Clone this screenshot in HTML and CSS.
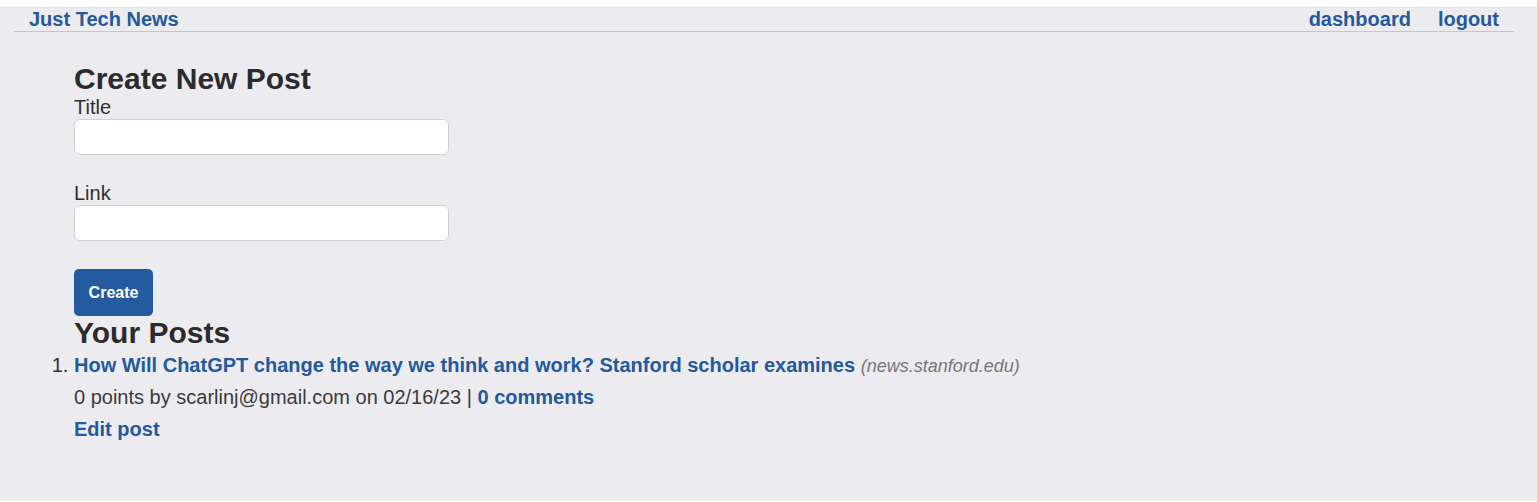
FILE: index.html
```html
<!DOCTYPE html>
<html>
<head>
<meta charset="utf-8">
<title>Just Tech News</title>
<link rel="stylesheet" href="styles.css">
</head>
<body>
<div class="page">
  <header class="topbar">
    <a class="brand" href="#">Just Tech News</a>
    <nav class="nav">
      <a href="#">dashboard</a>
      <a href="#">logout</a>
    </nav>
  </header>
  <main class="content">
    <h2 class="heading">Create New Post</h2>
    <form class="post-form">
      <label class="label" for="title">Title</label>
      <input class="field" id="title" type="text">
      <label class="label" for="link">Link</label>
      <input class="field" id="link" type="text">
      <button class="btn" type="button">Create</button>
    </form>
    <h2 class="heading">Your Posts</h2>
    <ol class="posts">
      <li class="post">
        <div class="post-title"><a href="#">How Will ChatGPT change the way we think and work? Stanford scholar examines</a> <span class="domain">(news.stanford.edu)</span></div>
        <div class="meta">0 points by scarlinj@gmail.com on 02/16/23 | <a href="#">0 comments</a></div>
        <div class="edit"><a href="#">Edit post</a></div>
      </li>
    </ol>
  </main>
</div>
</body>
</html>
```

FILE: styles.css
```css
html, body {
  margin: 0;
  padding: 0;
  background: #ffffff;
}
body {
  font-family: "Liberation Sans", Arial, sans-serif;
  color: #2e2e30;
}
a {
  color: #24599b;
  text-decoration: none;
  font-weight: bold;
}
.page {
  margin-top: 7px;
  border-top: 1px solid #e0e0e4;
  background: #ececf0;
  min-height: 494px;
  box-sizing: border-box;
}
.topbar {
  margin-left: 14px;
  width: 1500px;
  display: flex;
  justify-content: space-between;
  align-items: center;
  padding: 0 15px 0 15px;
  box-sizing: border-box;
  height: 24px;
  border-bottom: 1px solid #c5c5ca;
  font-size: 20px;
}
.nav {
  display: flex;
  gap: 27px;
}
.content {
  padding: 30px 0 0 74px;
}
.heading {
  margin: 0;
  font-size: 30px;
  line-height: 34px;
  font-weight: bold;
  color: #2b2b2d;
}
.post-form {
  display: flex;
  flex-direction: column;
  align-items: flex-start;
}
.label {
  font-size: 20px;
  line-height: 23px;
}
.field {
  width: 375px;
  height: 36px;
  box-sizing: border-box;
  border: 1px solid #cfcfd4;
  border-radius: 6px;
  background: #fff;
  margin: 0 0 27px 0;
  padding: 4px 8px;
  font-size: 16px;
}
.btn {
  width: 79px;
  height: 47px;
  margin-top: 1px;
  border: none;
  border-radius: 5px;
  background: #245a9e;
  color: #fff;
  font-family: "Liberation Sans", Arial, sans-serif;
  font-weight: bold;
  font-size: 16px;
  padding: 0;
}
.posts {
  margin: 0;
  padding: 0;
  font-size: 20px;
}
.post-title {
  line-height: 30px;
}
.meta {
  line-height: 32px;
  color: #3a3a3c;
}
.edit {
  line-height: 33px;
}
.post::marker {
  color: #2e2e30;
}
.domain {
  font-style: italic;
  color: #767679;
  font-size: 18px;
}
```
